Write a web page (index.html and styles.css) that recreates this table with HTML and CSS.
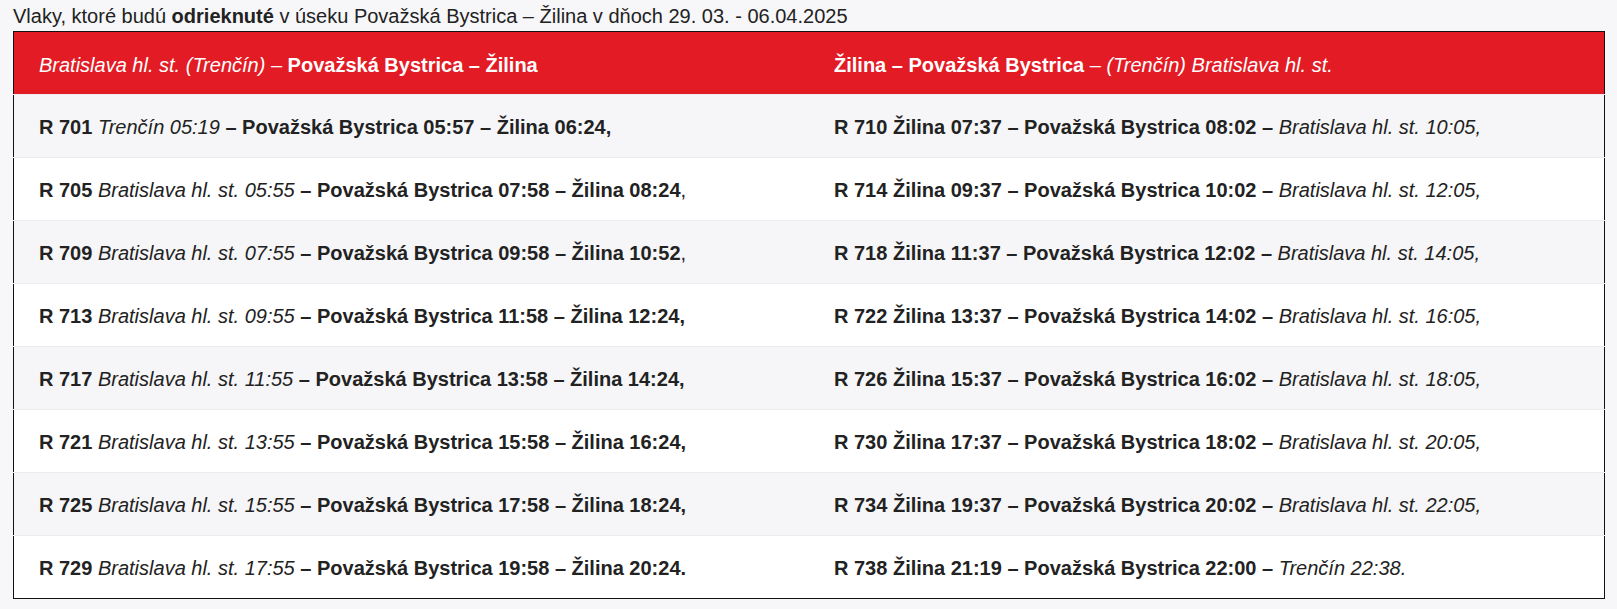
FILE: index.html
```html
<!DOCTYPE html>
<html lang="sk">
<head>
<meta charset="utf-8">
<title>Odrieknuté vlaky</title>
<link rel="stylesheet" href="styles.css">
</head>
<body>
<p class="intro">Vlaky, ktoré budú <b>odrieknuté</b> v úseku Považská Bystrica – Žilina v dňoch 29. 03. - 06.04.2025</p>
<table class="trains">
  <thead>
    <tr>
      <th><i>Bratislava hl. st. (Trenčín)</i> – <b>Považská Bystrica – Žilina</b></th>
      <th><b>Žilina – Považská Bystrica</b> – <i>(Trenčín) Bratislava hl. st.</i></th>
    </tr>
  </thead>
  <tbody>
    <tr>
      <td><b>R 701</b> <i>Trenčín 05:19</i> <b>– Považská Bystrica 05:57 – Žilina 06:24,</b></td>
      <td><b>R 710 Žilina 07:37 – Považská Bystrica 08:02 –</b> <i>Bratislava hl. st. 10:05,</i></td>
    </tr>
    <tr>
      <td><b>R 705</b> <i>Bratislava hl. st. 05:55</i> <b>– Považská Bystrica 07:58 – Žilina 08:24</b>,</td>
      <td><b>R 714 Žilina 09:37 – Považská Bystrica 10:02 –</b> <i>Bratislava hl. st. 12:05,</i></td>
    </tr>
    <tr>
      <td><b>R 709</b> <i>Bratislava hl. st. 07:55</i> <b>– Považská Bystrica 09:58 – Žilina 10:52</b>,</td>
      <td><b>R 718 Žilina 11:37 – Považská Bystrica 12:02 –</b> <i>Bratislava hl. st. 14:05,</i></td>
    </tr>
    <tr>
      <td><b>R 713</b> <i>Bratislava hl. st. 09:55</i> <b>– Považská Bystrica 11:58 – Žilina 12:24,</b></td>
      <td><b>R 722 Žilina 13:37 – Považská Bystrica 14:02 –</b> <i>Bratislava hl. st. 16:05,</i></td>
    </tr>
    <tr>
      <td><b>R 717</b> <i>Bratislava hl. st. 11:55</i> <b>– Považská Bystrica 13:58 – Žilina 14:24,</b></td>
      <td><b>R 726 Žilina 15:37 – Považská Bystrica 16:02 –</b> <i>Bratislava hl. st. 18:05,</i></td>
    </tr>
    <tr>
      <td><b>R 721</b> <i>Bratislava hl. st. 13:55</i> <b>– Považská Bystrica 15:58 – Žilina 16:24,</b></td>
      <td><b>R 730 Žilina 17:37 – Považská Bystrica 18:02 –</b> <i>Bratislava hl. st. 20:05,</i></td>
    </tr>
    <tr>
      <td><b>R 725</b> <i>Bratislava hl. st. 15:55</i> <b>– Považská Bystrica 17:58 – Žilina 18:24,</b></td>
      <td><b>R 734 Žilina 19:37 – Považská Bystrica 20:02 –</b> <i>Bratislava hl. st. 22:05,</i></td>
    </tr>
    <tr>
      <td><b>R 729</b> <i>Bratislava hl. st. 17:55</i> <b>– Považská Bystrica 19:58 – Žilina 20:24.</b></td>
      <td><b>R 738 Žilina 21:19 – Považská Bystrica 22:00 –</b> <i>Trenčín 22:38.</i></td>
    </tr>
  </tbody>
</table>
</body>
</html>
```
FILE: styles.css
```css
html, body {
  margin: 0;
  padding: 0;
  background: #f7f7f9;
}
body {
  font-family: "Liberation Sans", Arial, sans-serif;
  color: #222;
  padding: 0 12px 0 13px;
}
.intro {
  margin: 0;
  padding-top: 1px;
  font-size: 20px;
  line-height: 30px;
  height: 30px;
}
.trains {
  width: 1592px;
  border-collapse: collapse;
  border: 1px solid #111;
  table-layout: fixed;
  font-size: 20px;
}
.trains th,
.trains td {
  width: 50%;
  text-align: left;
  padding: 0 25px;
  font-weight: normal;
}
.trains th {
  background: #e31b24;
  color: #fff;
  height: 57px;
  padding-top: 5px;
}
.trains td {
  height: 60px;
  padding-top: 2px;
  border-top: 1px solid #ececef;
}
.trains tbody tr:nth-child(odd) td {
  background: #f6f6f8;
}
.trains tbody tr:nth-child(even) td {
  background: #fff;
}
.trains b {
  font-weight: bold;
}
```
